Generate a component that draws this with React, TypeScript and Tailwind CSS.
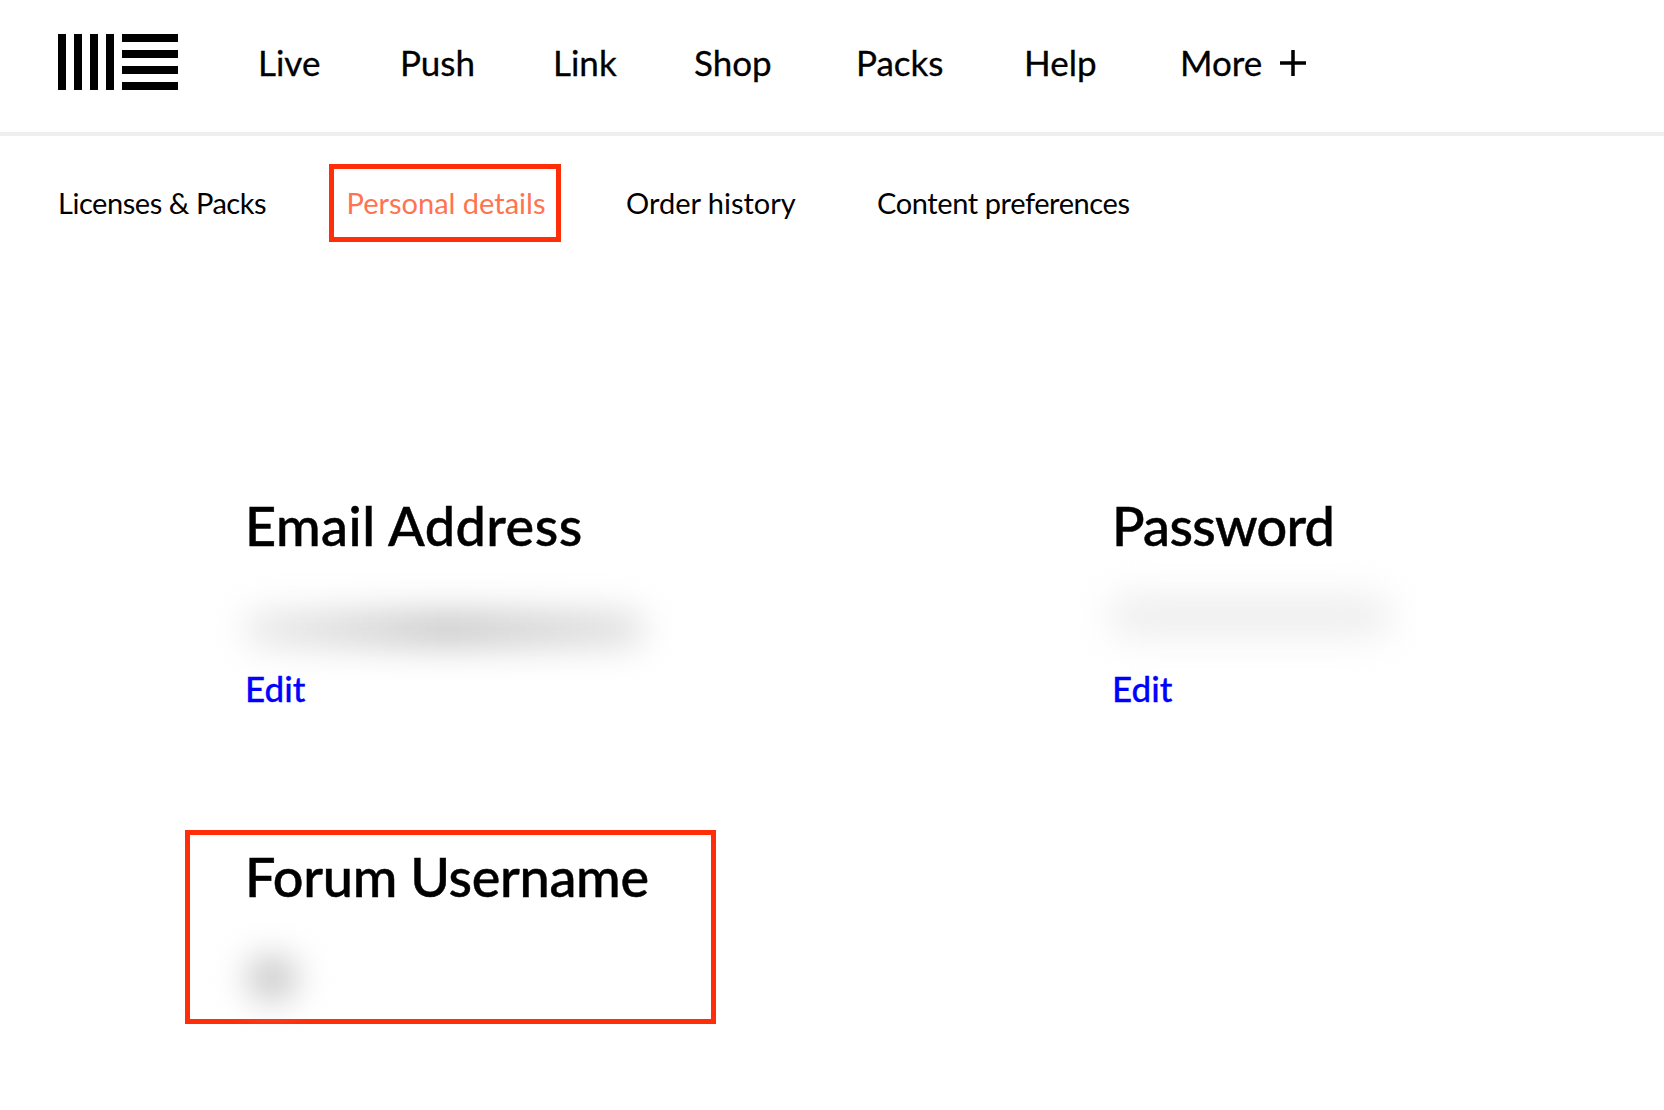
const navItems = [
  { label: "Live", width: "w-[142px]" },
  { label: "Push", width: "w-[153px]" },
  { label: "Link", width: "w-[141px]" },
  { label: "Shop", width: "w-[162px]" },
  { label: "Packs", width: "w-[168px]" },
  { label: "Help", width: "w-[156px]" },
];

function Logo() {
  return (
    <svg width="120" height="56" viewBox="0 0 120 56" className="shrink-0" fill="#000">
      <rect x="0" y="0" width="8" height="56" />
      <rect x="16" y="0" width="8" height="56" />
      <rect x="32" y="0" width="8" height="56" />
      <rect x="48" y="0" width="8" height="56" />
      <rect x="64" y="0" width="56" height="8" />
      <rect x="64" y="16" width="56" height="8" />
      <rect x="64" y="32" width="56" height="8" />
      <rect x="64" y="48" width="56" height="8" />
    </svg>
  );
}

export default function App() {
  return (
    <div className="min-h-[1110px] bg-white text-black font-['Lato',sans-serif] overflow-hidden">
      {/* Main nav */}
      <header className="flex h-[136px] items-center border-b-4 border-[#eeeeee] pl-[58px] pb-[8px]">
        <Logo />
        <nav className="ml-[80px] flex items-center text-[35px] leading-none [-webkit-text-stroke:0.3px_#000]">
          {navItems.map((item) => (
            <a key={item.label} className={item.width}>
              {item.label}
            </a>
          ))}
          <a className="flex items-center gap-[18px]">
            More
            <svg width="26" height="26" viewBox="0 0 26 26" stroke="#000" strokeWidth="3.5" className="mt-[2px]">
              <path d="M13 0v26M0 13h26" />
            </svg>
          </a>
        </nav>
      </header>

      {/* Account tabs */}
      <div className="mt-[28px] flex items-center pl-[58px] text-[29px] leading-none">
        <a className="w-[271px] -translate-y-px tracking-[-0.45px]">Licenses &amp; Packs</a>
        <a className="flex h-[78px] w-[232px] items-center justify-center border-[5px] border-[#ff2d08] pl-[2px] pb-[2px] text-[#ff7350]">
          Personal details
        </a>
        <a className="ml-[65px] w-[251px] -translate-y-px">Order history</a>
        <a className="-translate-y-px tracking-[-0.4px]">Content preferences</a>
      </div>

      {/* Details */}
      <main className="mt-[251px] grid grid-cols-[867px_1fr] pl-[245px]">
        <section>
          <h2 className="text-[54px] leading-[66px] font-medium tracking-[0.5px] [-webkit-text-stroke:0.5px_#000]">Email Address</h2>
          <div className="mt-[52px] -ml-[2px] h-[36px] w-[402px] rounded-full bg-gradient-to-r from-[#ececec] via-[#c8c8c8] to-[#e2e2e2] blur-[17px]" />
          <a className="mt-[19px] block text-[35px] leading-[44px] font-medium text-[#0000ff] [-webkit-text-stroke:0.3px_#0000ff]">Edit</a>
        </section>
        <section>
          <h2 className="text-[54px] leading-[66px] font-medium -tracking-[0.7px] [-webkit-text-stroke:0.5px_#000]">Password</h2>
          <div className="mt-[36px] -ml-[4px] h-[42px] w-[284px] rounded-full bg-[#eeeeee] blur-[18px]" />
          <a className="mt-[29px] block text-[35px] leading-[44px] font-medium text-[#0000ff] [-webkit-text-stroke:0.3px_#0000ff]">Edit</a>
        </section>
        <section className="mt-[120px] -ml-[60px] h-[194px] w-[531px] border-[5px] border-[#ff2d08] pl-[55px] pt-[9px]">
          <h2 className="text-[54px] leading-[66px] font-medium -tracking-[0.3px] [-webkit-text-stroke:0.5px_#000]">Forum Username</h2>
          <div className="mt-[46px] ml-[2px] h-[44px] w-[50px] rounded-full bg-[#c6c6c6] blur-[17px]" />
        </section>
      </main>
    </div>
  );
}
